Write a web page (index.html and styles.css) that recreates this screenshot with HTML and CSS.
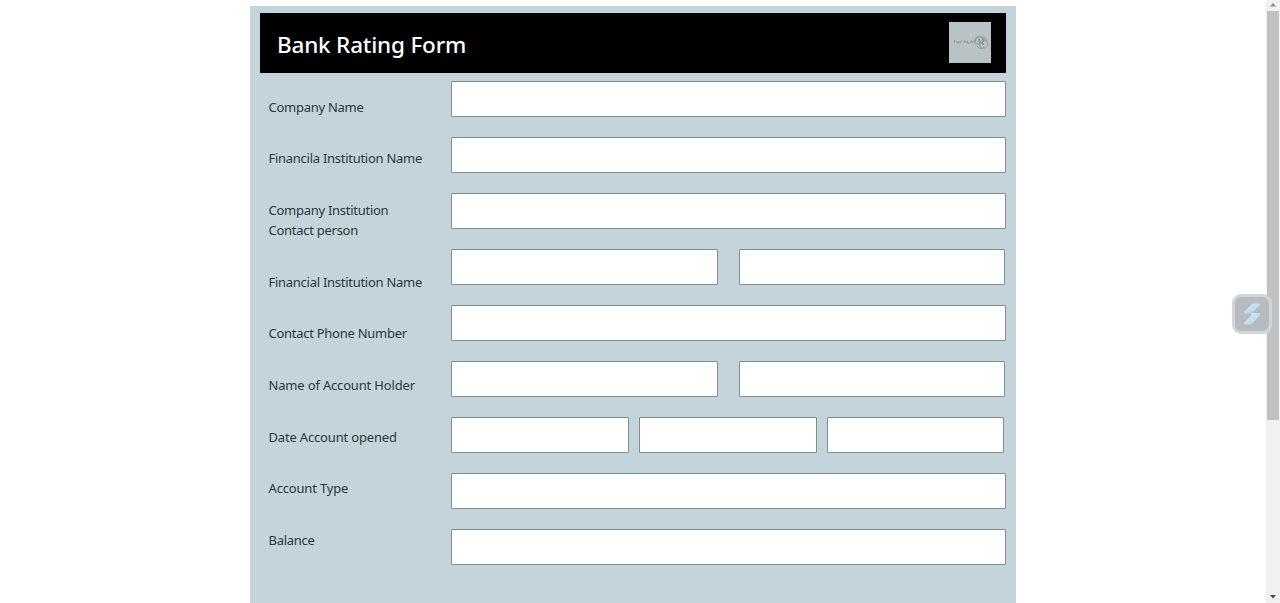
FILE: index.html
```html
<!DOCTYPE html>
<html lang="en">
<head>
<meta charset="utf-8">
<title>Bank Rating Form</title>
<link rel="stylesheet" href="styles.css">
</head>
<body>
<main class="page">
  <form class="panel">
    <header class="header">
      <h1 class="title">Bank Rating Form</h1>
      <svg class="logo" viewBox="0 0 42 41" aria-hidden="true">
        <rect width="42" height="41" fill="#b9c2c5"/>
        <g fill="none" stroke="#858e93" stroke-width=".8">
          <path d="M5.500 18v3M8 19v2h2v-2M12 21v-2h1.500M15 21l1-2.500 1 2.500M18.500 18.500v2.500h1.500M21.500 21l1-2.500 1 2.500M25 18.500v2.500" stroke-width=".8"/>
          <circle cx="30" cy="18.500" r="4"/>
          <circle cx="34.500" cy="22" r="4.300"/>
          <path d="M26 20c2-7 8-6 9-3s-4 5-6 2M28 24c2 3 5 3 7 1M34 15c3 0 4 3 3 5"/>
        </g>
        <path d="M29.500 16.500l1.500 1-1 2zM33.500 21l1.500 1-1.500 1.500z" fill="#626b70"/>
      </svg>
    </header>
    <div class="body">
      <div class="labels">
        <label>Company Name</label>
        <label>Financila Institution Name</label>
        <label>Company Institution<br>Contact person</label>
        <label>Financial Institution Name</label>
        <label>Contact Phone Number</label>
        <label class="loose">Name of Account Holder</label>
        <label class="loose">Date Account opened</label>
        <label class="loose">Account Type</label>
        <label>Balance</label>
      </div>
      <div class="fields">
        <div class="row"><input type="text"></div>
        <div class="row"><input type="text"></div>
        <div class="row"><input type="text"></div>
        <div class="row halves"><input type="text"><input type="text"></div>
        <div class="row"><input type="text"></div>
        <div class="row halves"><input type="text"><input type="text"></div>
        <div class="row thirds"><input type="text"><input type="text"><input type="text"></div>
        <div class="row"><input type="text"></div>
        <div class="row"><input type="text"></div>
      </div>
    </div>
  </form>
</main>
<aside class="scrollbar">
  <svg class="arrow" viewBox="0 0 14 11"><path d="M4 6.500L7 3l3 3.500z" fill="#858585"/></svg>
  <div class="thumb"></div>
  <svg class="arrow" viewBox="0 0 14 11"><path d="M4 3h6L7 6.500z" fill="#484848"/></svg>
</aside>
<div class="widget">
  <svg viewBox="0 0 34 34" width="34" height="34">
    <defs><linearGradient id="blue" x1="0" y1="0" x2="1" y2="1"><stop offset="0" stop-color="#d8e8f5"/><stop offset="1" stop-color="#b5d4ee"/></linearGradient></defs>
    <g fill="url(#blue)">
      <path d="M18.500 6.500h5.500q1.500 0 1 1.500L17.500 15.500q-1 1-2.300 1H10q-1.700 0-1-1.400l7.500-7.700q.8-.9 2-.9z"/>
      <path d="M18.500 17h5.500q1.500 0 1 1.500L17.500 26.500q-1 1-2.300 1H9.700q-1.700 0-.8-1.500l7.600-8q.9-1 2-1z"/>
      <path d="M16 16h8.500q1 0 .5 1.500l-3 4-5-3z"/>
    </g>
  </svg>
</div>
</body>
</html>
```
FILE: styles.css
```css
* { box-sizing: border-box; }
body {
  margin: 0;
  height: 603px;
  display: flex;
  overflow: hidden;
  background: #fff;
  font-family: "Noto Sans", "Open Sans", sans-serif;
}
.page {
  flex: 1;
  padding: 5.5px 0 0 250px;
}
.panel {
  width: 766px;
  height: 620px;
  padding: 7.5px 10px 0;
  background: #c3d5db;
}
.header {
  display: flex;
  justify-content: space-between;
  align-items: flex-start;
  height: 60px;
  padding: 9px 15px 0 17px;
  background: #000;
}
.title {
  margin: 0;
  padding-top: 8px;
  color: #fff;
  font-size: 22.500px;
  font-weight: 500;
  letter-spacing: -0.2px;
  line-height: 30px;
}
.logo {
  width: 42px;
  height: 41px;
}
.body {
  display: grid;
  grid-template-columns: 182.5px 555px;
  padding: 8px 0 0 8.5px;
}
.labels {
  display: flex;
  flex-direction: column;
  gap: 31.620px;
  padding-top: 15.850px;
  color: #2d3539;
  font-size: 13px;
  letter-spacing: -0.27px;
  line-height: 20px;
  white-space: nowrap;
}
.loose { letter-spacing: -0.17px; }
.fields {
  display: flex;
  flex-direction: column;
  gap: 20px;
}
.row {
  display: grid;
  height: 36px;
}
.halves {
  grid-template-columns: 267px 266px;
  column-gap: 21px;
}
.thirds {
  grid-template-columns: 178px 178px 177px;
  column-gap: 10px;
}
.row input {
  width: 100%;
  height: 36px;
  margin: 0;
  border: 1px solid #838b8d;
  border-radius: 1px;
  background: #fff;
}
.scrollbar {
  display: flex;
  flex-direction: column;
  width: 14px;
  background: #f1f1f1;
}
.arrow {
  width: 14px;
  height: 11px;
}
.thumb {
  width: 12px;
  height: 409px;
  margin: 0 1px auto;
  background: #c1c1c1;
}
.widget {
  position: absolute;
  left: 1232px;
  top: 294px;
  width: 40px;
  height: 40px;
  border: 3px solid #d3d6d9;
  border-radius: 9px;
  background: #b7babf;
}
.widget svg { display: block; }
```
